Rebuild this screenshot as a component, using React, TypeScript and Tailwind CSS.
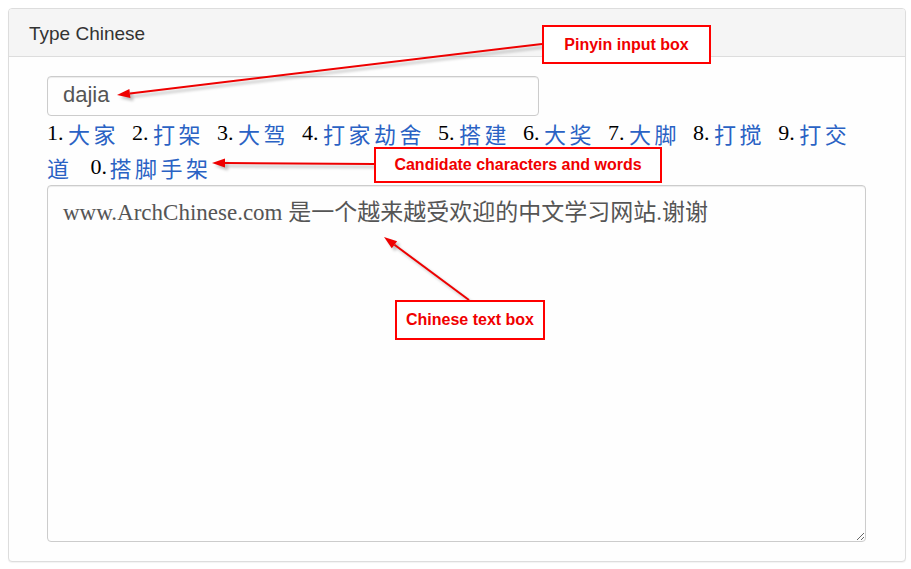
import { Fragment } from "react"

const candidates = [
  { n: "1.", w: "大家" },
  { n: "2.", w: "打架" },
  { n: "3.", w: "大驾" },
  { n: "4.", w: "打家劫舍" },
  { n: "5.", w: "搭建" },
  { n: "6.", w: "大奖" },
  { n: "7.", w: "大脚" },
  { n: "8.", w: "打搅" },
]

const serif = "font-['Liberation_Serif','Noto_Sans_CJK_SC',serif]"
const cjk = "font-['Noto_Sans_CJK_SC',sans-serif]"

function Label({ text, className }: { text: string; className: string }) {
  return (
    <div
      className={`absolute flex items-center justify-center border-2 border-[#ff0000] bg-white font-['Liberation_Sans',Arial,sans-serif] text-[16px] font-bold text-[#f00000] ${className}`}
    >
      {text}
    </div>
  )
}

function Arrow({ x1, y1, x2, y2 }: { x1: number; y1: number; x2: number; y2: number }) {
  const a = Math.atan2(y2 - y1, x2 - x1)
  const len = 13
  const half = 4.5
  const bx = x2 - len * Math.cos(a)
  const by = y2 - len * Math.sin(a)
  const px = -Math.sin(a) * half
  const py = Math.cos(a) * half
  const head = `${x2},${y2} ${bx + px},${by + py} ${bx - px},${by - py}`
  return (
    <g>
      <g transform="translate(3,3)" opacity="0.25" filter="url(#blur)">
        <line x1={x1} y1={y1} x2={bx} y2={by} stroke="#000" strokeWidth="2" />
        <polygon points={head} fill="#000" />
      </g>
      <line x1={x1} y1={y1} x2={bx} y2={by} stroke="#ee0000" strokeWidth="2" />
      <polygon points={head} fill="#ee0000" />
    </g>
  )
}

export default function App() {
  return (
    <div className="relative h-[569px] w-[911px] overflow-hidden bg-white p-2">
      {/* Panel */}
      <div className="flex h-[554px] w-[898px] flex-col rounded-[4px] border border-[#dddddd] bg-[#fefefe] shadow-[0_1px_1px_rgba(0,0,0,0.05)]">
        <div className="flex h-[48px] items-center rounded-t-[3px] border-b border-[#dddddd] bg-[#f5f5f5] pl-5 pt-[4px] font-['Liberation_Sans',Arial,sans-serif] text-[19px] text-[#333333]">
          Type Chinese
        </div>

        <div className="flex flex-1 flex-col px-[38px] pt-[19px] pb-[19px]">
          <input
            readOnly
            value="dajia"
            className="h-[40px] w-[492px] rounded-[4px] border border-[#cccccc] px-[15px] pb-[2px] font-['Liberation_Sans',Arial,sans-serif] text-[22px] text-[#555555] shadow-[inset_0_1px_1px_rgba(0,0,0,0.075)] outline-none"
          />

          {/* Candidates */}
          <div className={`text-[22px] leading-[34px] ${serif}`}>
            <div className="flex h-[34px] items-center whitespace-nowrap">
              {candidates.map((c) => (
                <Fragment key={c.n}>
                  <span className="inline-block w-[21px] text-black">{c.n}</span>
                  <span className={`mr-[13px] tracking-[3.5px] text-[#2a62c4] ${cjk} text-[22px]`}>{c.w}</span>
                </Fragment>
              ))}
              <span className="inline-block w-[21px] text-black">9.</span>
              <span className={`tracking-[3.5px] text-[#2a62c4] ${cjk} text-[22px]`}>打交</span>
            </div>
            <div className="flex h-[34px] items-center whitespace-nowrap">
              <span className={`mr-[18px] tracking-[3.5px] text-[#2a62c4] ${cjk} text-[22px]`}>道</span>
              <span className="inline-block w-[19px] text-black">0.</span>
              <span className={`tracking-[3.5px] text-[#2a62c4] ${cjk} text-[22px]`}>搭脚手架</span>
            </div>
          </div>

          <textarea
            readOnly
            value="www.ArchChinese.com 是一个越来越受欢迎的中文学习网站.谢谢"
            className={`mt-[1px] h-[357px] w-[819px] rounded-[4px] border border-[#cccccc] px-[15px] pt-[12px] pb-[8px] text-[23px] leading-[30px] text-[#555555] shadow-[inset_0_1px_1px_rgba(0,0,0,0.075)] outline-none ${serif}`}
          />
        </div>
      </div>

      {/* Annotations */}
      <svg className="pointer-events-none absolute left-0 top-0" width="911" height="569">
        <defs>
          <filter id="blur" x="-10%" y="-50%" width="120%" height="200%">
            <feGaussianBlur stdDeviation="1.5" />
          </filter>
        </defs>
        <Arrow x1={542} y1={44} x2={117} y2={95} />
        <Arrow x1={374} y1={164} x2={212} y2={163} />
        <Arrow x1={469} y1={300} x2={384} y2={237} />
      </svg>

      <Label text="Pinyin input box" className="left-[542px] top-[25px] h-[39px] w-[169px]" />
      <Label text="Candidate characters and words" className="left-[374px] top-[147px] h-[36px] w-[288px]" />
      <Label text="Chinese text box" className="left-[395px] top-[300px] h-[40px] w-[150px]" />
    </div>
  )
}
